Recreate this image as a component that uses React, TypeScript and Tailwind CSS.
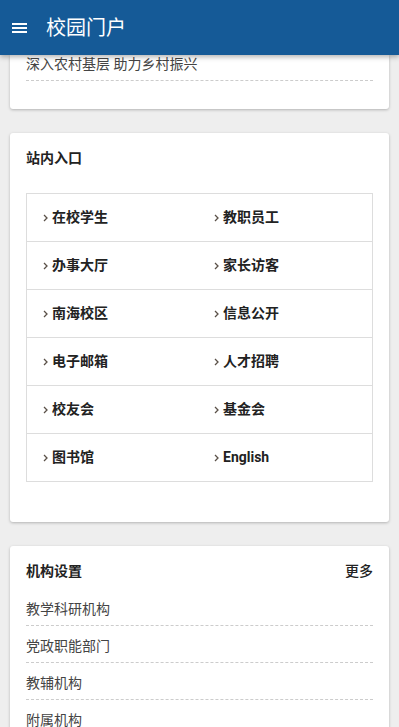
const entries = [
  "在校学生",
  "教职员工",
  "办事大厅",
  "家长访客",
  "南海校区",
  "信息公开",
  "电子邮箱",
  "人才招聘",
  "校友会",
  "基金会",
  "图书馆",
  "English",
];

const orgs = ["教学科研机构", "党政职能部门", "教辅机构", "附属机构"];

function Chevron() {
  return (
    <svg width="5" height="8" viewBox="0 0 5 8" className="shrink-0">
      <polyline points="1,1 4,4 1,7" fill="none" stroke="#5a5048" strokeWidth="1.3" />
    </svg>
  );
}

function Card({ children, className = "" }: { children: React.ReactNode; className?: string }) {
  return (
    <div className={`rounded-[3px] bg-white px-4 shadow-[0_1px_3px_rgba(0,0,0,0.25)] ${className}`}>
      {children}
    </div>
  );
}

export default function App() {
  return (
    <div
      className="min-h-[727px] bg-[#eeeeee] text-[14px] text-[#333]"
      style={{ fontFamily: 'Roboto, "Noto Sans CJK SC", sans-serif' }}
    >
      <header className="relative z-10 flex h-[55px] items-center bg-[#155a97] pl-3 text-white shadow-[0_2px_5px_rgba(0,0,0,0.3)]">
        <div className="flex w-[15px] flex-col gap-[2px]">
          <span className="h-[2px] bg-white" />
          <span className="h-[2px] bg-white" />
          <span className="h-[2px] bg-white" />
        </div>
        <h1 className="ml-[19px] text-[20px] leading-none">校园门户</h1>
      </header>

      <div className="flex flex-col gap-6 px-[10px]">
        <Card className="rounded-t-none pb-[28px]">
          <div className="border-b border-dashed border-[#cccccc] pb-[7px] leading-[18px] text-[#444]">
            深入农村基层 助力乡村振兴
          </div>
        </Card>

        <Card className="pt-4 pb-[40px]">
          <h2 className="text-[14px] font-bold leading-[18px] text-[#222]">站内入口</h2>
          <div className="mt-[26px] grid grid-cols-[171px_1fr] border-x border-b border-[#dddddd]">
            {entries.map((e) => (
              <div
                key={e}
                className="flex h-[48px] items-center gap-[4px] border-t border-[#dddddd] pl-4 font-bold text-[#222]"
              >
                <Chevron />
                <span>{e}</span>
              </div>
            ))}
          </div>
        </Card>

        <Card className="pt-4 pb-4">
          <div className="flex items-center justify-between leading-[18px] text-[#222]">
            <h2 className="text-[14px] font-bold">机构设置</h2>
            <span className="font-medium">更多</span>
          </div>
          <ul className="mt-[9px]">
            {orgs.map((o) => (
              <li
                key={o}
                className="border-b border-dashed border-[#cccccc] pt-[11px] pb-[7px] leading-[18px] text-[#444]"
              >
                {o}
              </li>
            ))}
          </ul>
        </Card>
      </div>
    </div>
  );
}
